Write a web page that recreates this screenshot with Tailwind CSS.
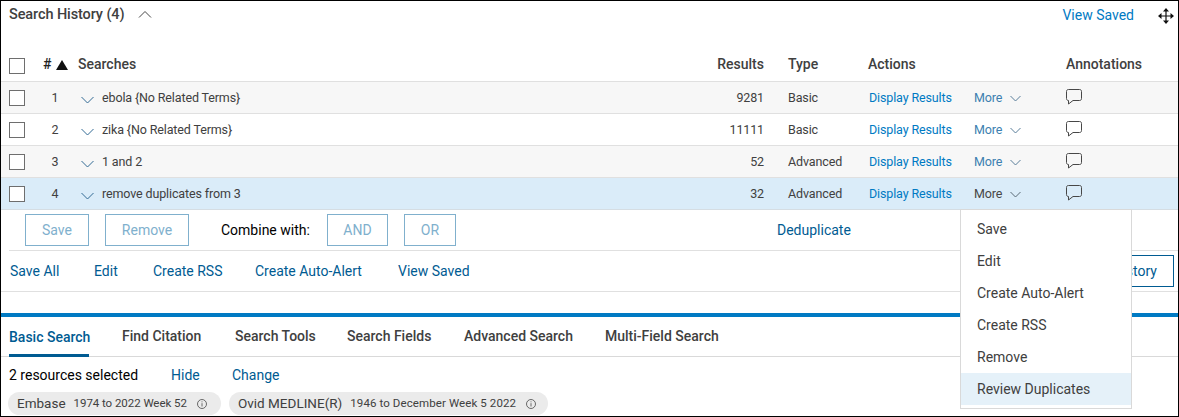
<!DOCTYPE html>
<html>
<head>
<meta charset="utf-8">
<script src="https://cdn.jsdelivr.net/npm/@tailwindcss/browser@4"></script>
</head>
<body class="m-0 bg-white">
<div class="relative w-[1179px] h-[417px] overflow-hidden border border-black bg-white text-[#404040] font-['Roboto',sans-serif] text-[12.5px] tracking-[-0.13px]">
  <!-- title -->
  <div class="h-[49px] flex items-start pl-2 pr-[4px] pt-[5px]">
    <span class="text-[14.500px] tracking-[-0.1px] font-medium leading-[18px] w-[115px] whitespace-nowrap">Search History (4)</span>
    <svg class="ml-[14px] mt-[4px]" width="14" height="9" viewBox="0 0 14 9" fill="none" stroke="#474747" stroke-width="1"><path d="M1 7.500L7 1.500L13 7.500"/></svg>
    <span class="ml-auto mr-[24px] text-[14px] tracking-normal leading-[18px] text-[#007ac3]">View Saved</span>
    <svg class="mt-[2px]" width="16" height="16" viewBox="0 0 16 16" fill="#111" stroke="#111" stroke-width="1.2"><path d="M8 2V14M2 8H14" fill="none"/><path stroke="none" d="M8 0L11 3.500H5ZM8 16L5 12.500H11ZM0 8L3.500 5V11ZM16 8L12.500 11V5Z"/></svg>
  </div>
  <!-- table head -->
  <div class="h-[32px] pb-[2px] grid grid-cols-[24px_45px_622px_64px_105px_197px_1fr] items-center border-b border-[#e0e0e0] text-[14px] tracking-normal font-medium pl-2">
    <span class="w-4 h-4 -mb-[2px] border border-[#6e6e6e] bg-white"></span>
    <span class="flex items-center pl-[10px] text-[#222]">#<svg class="ml-[5px]" width="12" height="10" viewBox="0 0 12 10" fill="#111"><path d="M6 0L12 10H0Z"/></svg></span>
    <span>Searches</span>
    <span class="text-right">Results</span>
    <span class="pl-[24px]">Type</span>
    <span class="-ml-px">Actions</span>
    <span>Annotations</span>
  </div>
  <!-- rows -->
  <div class="h-[32px] pt-[2px] grid grid-cols-[24px_44px_25px_598px_64px_105px_105px_92px_1fr] items-center border-b border-[#e0e0e0] bg-[#f7f7f7] pl-2">
    <span class="w-4 h-4 -mt-[2px] border border-[#6e6e6e] bg-white"></span>
    <span class="text-center">1</span>
    <svg width="13" height="8" class="ml-1 mt-[3px]" viewBox="0 0 13 8" fill="none" stroke="#336b94"><path d="M.5 1L6.500 7L12.500 1"/></svg>
    <span>ebola {No Related Terms}</span>
    <span class="text-right">9281</span>
    <span class="pl-[24px]">Basic</span>
    <span class="text-[#007ac3] whitespace-nowrap">Display Results</span>
    <span class="flex items-center text-[#3c7fb0]">More<svg class="ml-[8px]" width="11" height="7" viewBox="0 0 11 7" fill="none" stroke="#5a7f9a"><path d="M.5 1L5.500 6L10.500 1"/></svg></span>
    <svg class="-mt-[4px]" width="16" height="16" viewBox="0 0 16 16" fill="none" stroke="#474747"><path d="M2.500 .5H13.500C14.800 .5 15.500 1.200 15.500 2.500V9.500C15.500 10.800 14.800 11.500 13.500 11.500H7L2.500 15V11.500C1.200 11.500 .5 10.800 .5 9.500V2.500C.5 1.200 1.200 .5 2.500 .5Z"/></svg>
  </div>
  <div class="h-[32px] pt-[2px] grid grid-cols-[24px_44px_25px_598px_64px_105px_105px_92px_1fr] items-center border-b border-[#e0e0e0] pl-2">
    <span class="w-4 h-4 -mt-[2px] border border-[#6e6e6e] bg-white"></span>
    <span class="text-center">2</span>
    <svg width="13" height="8" class="ml-1 mt-[3px]" viewBox="0 0 13 8" fill="none" stroke="#336b94"><path d="M.5 1L6.500 7L12.500 1"/></svg>
    <span>zika {No Related Terms}</span>
    <span class="text-right">11111</span>
    <span class="pl-[24px]">Basic</span>
    <span class="text-[#007ac3] whitespace-nowrap">Display Results</span>
    <span class="flex items-center text-[#3c7fb0]">More<svg class="ml-[8px]" width="11" height="7" viewBox="0 0 11 7" fill="none" stroke="#5a7f9a"><path d="M.5 1L5.500 6L10.500 1"/></svg></span>
    <svg class="-mt-[4px]" width="16" height="16" viewBox="0 0 16 16" fill="none" stroke="#474747"><path d="M2.500 .5H13.500C14.800 .5 15.500 1.200 15.500 2.500V9.500C15.500 10.800 14.800 11.500 13.500 11.500H7L2.500 15V11.500C1.200 11.500 .5 10.800 .5 9.500V2.500C.5 1.200 1.200 .5 2.500 .5Z"/></svg>
  </div>
  <div class="h-[32px] pt-[2px] grid grid-cols-[24px_44px_25px_598px_64px_105px_105px_92px_1fr] items-center border-b border-[#e0e0e0] bg-[#f7f7f7] pl-2">
    <span class="w-4 h-4 -mt-[2px] border border-[#6e6e6e] bg-white"></span>
    <span class="text-center">3</span>
    <svg width="13" height="8" class="ml-1 mt-[3px]" viewBox="0 0 13 8" fill="none" stroke="#336b94"><path d="M.5 1L6.500 7L12.500 1"/></svg>
    <span>1 and 2</span>
    <span class="text-right">52</span>
    <span class="pl-[24px]">Advanced</span>
    <span class="text-[#007ac3] whitespace-nowrap">Display Results</span>
    <span class="flex items-center text-[#3c7fb0]">More<svg class="ml-[8px]" width="11" height="7" viewBox="0 0 11 7" fill="none" stroke="#5a7f9a"><path d="M.5 1L5.500 6L10.500 1"/></svg></span>
    <svg class="-mt-[4px]" width="16" height="16" viewBox="0 0 16 16" fill="none" stroke="#474747"><path d="M2.500 .5H13.500C14.800 .5 15.500 1.200 15.500 2.500V9.500C15.500 10.800 14.800 11.500 13.500 11.500H7L2.500 15V11.500C1.200 11.500 .5 10.800 .5 9.500V2.500C.5 1.200 1.200 .5 2.500 .5Z"/></svg>
  </div>
  <div class="h-[32px] pt-[2px] grid grid-cols-[24px_44px_25px_598px_64px_105px_105px_92px_1fr] items-center border-b border-[#d5dde3] bg-[#daecf9] pl-2">
    <span class="w-4 h-4 -mt-[2px] border border-[#6e6e6e] bg-white"></span>
    <span class="text-center">4</span>
    <svg width="13" height="8" class="ml-1 mt-[3px]" viewBox="0 0 13 8" fill="none" stroke="#336b94"><path d="M.5 1L6.500 7L12.500 1"/></svg>
    <span>remove duplicates from 3</span>
    <span class="text-right">32</span>
    <span class="pl-[24px]">Advanced</span>
    <span class="text-[#007ac3] whitespace-nowrap">Display Results</span>
    <span class="flex items-center text-[#474747]">More<svg class="ml-[8px]" width="11" height="7" viewBox="0 0 11 7" fill="none" stroke="#5a6a76"><path d="M.5 1L5.500 6L10.500 1"/></svg></span>
    <svg class="-mt-[4px]" width="16" height="16" viewBox="0 0 16 16" fill="none" stroke="#474747"><path d="M2.500 .5H13.500C14.800 .5 15.500 1.200 15.500 2.500V9.500C15.500 10.800 14.800 11.500 13.500 11.500H7L2.500 15V11.500C1.200 11.500 .5 10.800 .5 9.500V2.500C.5 1.200 1.200 .5 2.500 .5Z"/></svg>
  </div>
  <!-- actions -->
  <div class="ml-2 h-[41px] flex items-center pl-4 border-b border-[#e0e0e0] text-[14px] tracking-normal">
    <span class="w-16 h-8 flex items-center justify-center border border-[#80b0cd] text-[#80b0cd]">Save</span>
    <span class="ml-4 w-[84px] h-8 flex items-center justify-center border border-[#80b0cd] text-[#80b0cd]">Remove</span>
    <span class="ml-8 w-[91px] text-black whitespace-nowrap">Combine with:</span>
    <span class="ml-[15px] w-[61px] h-8 flex items-center justify-center border border-[#80b0cd] text-[#80b0cd]">AND</span>
    <span class="ml-4 w-[52px] h-8 flex items-center justify-center border border-[#80b0cd] text-[#80b0cd]">OR</span>
    <span class="ml-[321px] text-[#005b92]">Deduplicate</span>
  </div>
  <div class="h-[41px] flex items-center pl-[9px] pr-[4px] border-b border-[#e0e0e0] text-[14px] tracking-normal text-[#005b92]">
    <span class="w-[84px]">Save All</span>
    <span class="w-[59px]">Edit</span>
    <span class="w-[102px]">Create RSS</span>
    <span class="w-[143px]">Create Auto-Alert</span>
    <span>View Saved</span>
    <span class="ml-auto w-[120px] h-8 flex items-center justify-end pr-[16px] border border-[#005b92] whitespace-nowrap">Review History</span>
  </div>
  <!-- search panel -->
  <div class="mt-[21px] border-t-4 border-[#007ac3]">
    <div class="h-[40px] flex items-stretch border-b border-[#d9d9d9] text-[14px] tracking-normal font-medium pl-2">
      <span class="w-[80px] mr-[33px] flex items-center border-b-[3px] border-[#005b92] text-[#005b92] -mb-px pt-[3px] whitespace-nowrap">Basic Search</span>
      <span class="w-[113px] flex items-center whitespace-nowrap">Find Citation</span>
      <span class="w-[112px] flex items-center whitespace-nowrap">Search Tools</span>
      <span class="w-[117px] flex items-center whitespace-nowrap">Search Fields</span>
      <span class="w-[141px] flex items-center whitespace-nowrap">Advanced Search</span>
      <span class="flex items-center whitespace-nowrap">Multi-Field Search</span>
    </div>
    <div class="h-[35px] flex items-center pl-2 pt-[2px] text-[14px] tracking-normal text-black">
      <span class="w-[162px]">2 resources selected</span>
      <span class="w-[61px] text-[#005b92]">Hide</span>
      <span class="text-[#005b92]">Change</span>
    </div>
    <div class="flex gap-2 pl-[7px]">
      <span class="h-[23px] w-[213px] rounded-full bg-[#ebebeb] flex items-center pl-[9px] text-[13.5px] tracking-normal whitespace-nowrap">Embase<span class="ml-2 text-[11.5px] tracking-[-0.05px]">1974 to 2022 Week 52</span><svg class="ml-[10px]" width="10" height="10" viewBox="0 0 10 10" fill="none" stroke="#474747" stroke-width=".8"><circle cx="5" cy="5" r="4.500"/><path d="M5 4.200V7.500M5 2.400V3.300"/></svg></span>
      <span class="h-[23px] w-[319px] rounded-full bg-[#ebebeb] flex items-center pl-[9px] text-[13.5px] tracking-normal whitespace-nowrap">Ovid MEDLINE(R)<span class="ml-2 text-[11.5px] tracking-[0.1px]">1946 to December Week 5 2022</span><svg class="ml-[10px]" width="10" height="10" viewBox="0 0 10 10" fill="none" stroke="#474747" stroke-width=".8"><circle cx="5" cy="5" r="4.500"/><path d="M5 4.200V7.500M5 2.400V3.300"/></svg></span>
    </div>
  </div>
  <!-- menu -->
  <div class="absolute left-[959px] top-[208px] w-[172px] h-[200px] bg-white border border-[#d9d9d9] pt-[3px] text-[14px] tracking-normal">
    <div class="h-8 flex items-center pl-4">Save</div>
    <div class="h-8 flex items-center pl-4">Edit</div>
    <div class="h-8 flex items-center pl-4">Create Auto-Alert</div>
    <div class="h-8 flex items-center pl-4">Create RSS</div>
    <div class="h-8 flex items-center pl-4">Remove</div>
    <div class="h-8 flex items-center pl-4 bg-[#e5f1f9]">Review Duplicates</div>
  </div>
</div>
</body>
</html>
